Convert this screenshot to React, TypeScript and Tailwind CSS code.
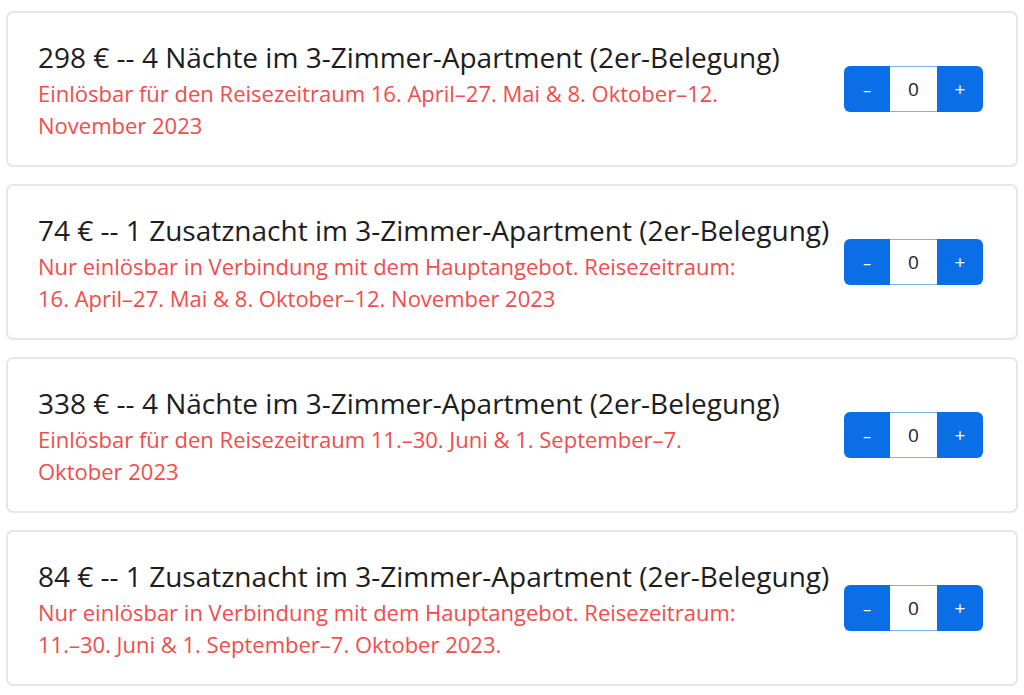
import React from "react";

const items = [
  {
    title: "298 € -- 4 Nächte im 3-Zimmer-Apartment (2er-Belegung)",
    note: "Einlösbar für den Reisezeitraum 16. April–27. Mai & 8. Oktober–12. November 2023",
  },
  {
    title: "74 € -- 1 Zusatznacht im 3-Zimmer-Apartment (2er-Belegung)",
    note: "Nur einlösbar in Verbindung mit dem Hauptangebot. Reisezeitraum: 16. April–27. Mai & 8. Oktober–12. November 2023",
  },
  {
    title: "338 € -- 4 Nächte im 3-Zimmer-Apartment (2er-Belegung)",
    note: "Einlösbar für den Reisezeitraum 11.–30. Juni & 1. September–7. Oktober 2023",
  },
  {
    title: "84 € -- 1 Zusatznacht im 3-Zimmer-Apartment (2er-Belegung)",
    note: "Nur einlösbar in Verbindung mit dem Hauptangebot. Reisezeitraum: 11.–30. Juni & 1. September–7. Oktober 2023.",
  },
];

function Stepper() {
  return (
    <div className="flex h-[46px] w-[139px] shrink-0 overflow-hidden rounded-[6px] bg-[#0a6fe6]">
      <button className="flex w-[46px] items-center justify-center pt-[2px] text-[16px] text-white">–</button>
      <div className="flex w-[47px] items-center justify-center border-y border-[#7fb3f0] bg-white text-[19px] text-[#222]">0</div>
      <button className="flex w-[46px] items-center justify-center text-[19px] text-white">+</button>
    </div>
  );
}

export default function App() {
  return (
    <div
      className="flex flex-col gap-[17px] bg-white px-[6px] pt-[11px] pb-[9px]"
      style={{ fontFamily: '"Open Sans", "Noto Sans", sans-serif' }}
    >
      {items.map((it, i) => (
        <div
          key={i}
          className="flex h-[156px] items-center justify-between rounded-[7px] border-2 border-[#e6e6e6] bg-white pl-[30px] pr-[33px]"
        >
          <div className="flex flex-col">
            <div className="text-[28px] leading-[38px] text-[#1d1d1d]">{it.title}</div>
            <div className="mt-[1px] max-w-[705px] text-[22px] leading-[32px] text-[#f24c4c]">{it.note}</div>
          </div>
          <Stepper />
        </div>
      ))}
    </div>
  );
}
